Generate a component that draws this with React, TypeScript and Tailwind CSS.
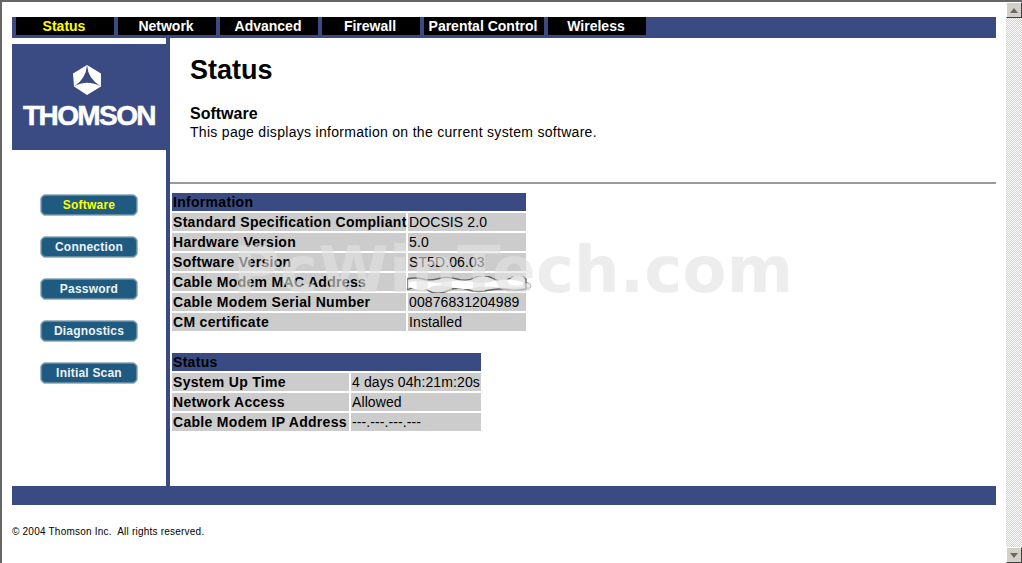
const tabs = [
  { label: 'Status', width: 'w-[98px]', active: true },
  { label: 'Network', width: 'w-[98px]' },
  { label: 'Advanced', width: 'w-[98px]' },
  { label: 'Firewall', width: 'w-[98px]' },
  { label: 'Parental Control', width: 'w-[120px]' },
  { label: 'Wireless', width: 'w-[98px]' },
];

const sideLinks = ['Software', 'Connection', 'Password', 'Diagnostics', 'Initial Scan'];

const infoRows = [
  ['Standard Specification Compliant', 'DOCSIS 2.0'],
  ['Hardware Version', '5.0'],
  ['Software Version', 'ST5D.06.03'],
  ['Cable Modem MAC Address', ''],
  ['Cable Modem Serial Number', '00876831204989'],
  ['CM certificate', 'Installed'],
];

const statusRows = [
  ['System Up Time', '4 days 04h:21m:20s'],
  ['Network Access', 'Allowed'],
  ['Cable Modem IP Address', '---.---.---.---'],
];

const ThomsonMark = () => (
  <svg className="mr-1" width="28" height="30" viewBox="0 0 28 30">
    <path d="M14 0L28 8.500V21.500L14 30L1 21.500L0 8.500Z" fill="#fff" />
    <path d="M14 0Q15 14 28 21.500Q14 14 1 21.500Q13 14 14 0Z" fill="#3a4b84" />
  </svg>
);

// white scribble someone painted over the MAC address
const Scribble = () => (
  <svg className="absolute left-[-1px] top-[3px]" width="125" height="17" viewBox="0 0 125 17">
    <path d="M0 3Q8 1 16 3T32 2.500T50 3T68 1.500T86 2.500T104 1.500T119 3L119 13Q110 15 100 13.500T80 14.500T60 13.500T40 15T20 14T0 14Z" fill="#e4e4e4" stroke="#666666" strokeWidth="1.400" />
    <path d="M2 6Q12 4.500 22 6T44 5.500T66 6T88 5T116 6L116 11Q104 12.500 88 11T66 12T44 11T22 12T2 11Z" fill="#ffffff" />
    <path d="M119 6L123 8L124 11Q122 13 119 12" fill="none" stroke="#888888" strokeWidth="1" />
  </svg>
);

const DataRow = ({ label, value, scribble }: { label: string; value: string; scribble?: boolean }) => (
  <>
    <div className="h-[18px] bg-[#cccccc] pl-px text-[14px] leading-[18px] font-bold tracking-[0.3px] whitespace-nowrap text-black">{label}</div>
    <div className="relative h-[18px] bg-[#cccccc] pl-px text-[14px] leading-[18px] tracking-[0.1px] whitespace-nowrap text-black">
      {value}
      {scribble && <Scribble />}
    </div>
  </>
);

export default function App() {
  return (
    <div className="relative flex h-[563px] w-[1022px] overflow-hidden border-t-2 border-l-2 border-[#666666] bg-white font-['Liberation_Sans',Arial,sans-serif]">
      <div className="w-[1004px] px-[10px] pt-[15px]">
        {/* Top tabs */}
        <nav className="flex h-[21px] items-start gap-1 bg-[#3a4b84] pl-1">
          {tabs.map((tab) => (
            <div
              key={tab.label}
              className={`flex h-[18px] items-center justify-center bg-black pr-[2px] text-[14px] font-bold ${tab.width} ${tab.active ? 'text-[#ffff00]' : 'text-white'}`}
            >
              {tab.label}
            </div>
          ))}
        </nav>

        <div className="flex h-[448px]">
          {/* Left column */}
          <aside className="w-[158px] border-r-4 border-[#3a4b84] pt-[6px]">
            <div className="flex h-[106px] flex-col items-center bg-[#3a4b84] pt-[21px]">
              <ThomsonMark />
              <span className="mt-1 text-[28px] leading-[34px] font-bold tracking-[-1.6px] text-white [-webkit-text-stroke:0.5px_white]">THOMSON</span>
            </div>
            <div className="mt-[44px] flex flex-col gap-5 pl-7">
              {sideLinks.map((link, i) => (
                <div
                  key={link}
                  className={`flex h-[22px] w-[98px] items-center justify-center rounded-[6px] border border-[#a5bbc6] bg-[#1f5a80] text-[12px] font-bold tracking-[0.2px] shadow-[inset_0_0_0_1px_#5f8aa2] ${i === 0 ? 'text-[#ffff00]' : 'text-[#eef3f6]'}`}
                >
                  {link}
                </div>
              ))}
            </div>
          </aside>

          {/* Main content */}
          <main className="flex-1">
            <div className="h-[144px] pl-5 pt-[15px]">
              <h1 className="text-[27px] leading-[34px] font-bold text-black">Status</h1>
              <h2 className="mt-[18px] text-[16px] leading-[18px] font-bold text-black">Software</h2>
              <p className="text-[14px] leading-[18px] tracking-[0.3px] text-black">This page displays information on the current system software.</p>
            </div>
            <div className="h-[2px] bg-[#9a9a9a]" />
            <div className="pl-[2px] pt-[9px]">
              <div className="grid w-[354px] grid-cols-[234px_118px] gap-[2px]">
                <div className="col-span-2 h-[18px] bg-[#3a4b84] pl-px text-[14px] leading-[18px] font-bold tracking-[0.3px] text-black">Information</div>
                {infoRows.map(([label, value]) => (
                  <DataRow key={label} label={label} value={value} scribble={label.includes('MAC')} />
                ))}
              </div>
              <div className="mt-[22px] grid w-[309px] grid-cols-[177px_130px] gap-[2px]">
                <div className="col-span-2 h-[18px] bg-[#3a4b84] pl-px text-[14px] leading-[18px] font-bold tracking-[0.3px] text-black">Status</div>
                {statusRows.map(([label, value]) => (
                  <DataRow key={label} label={label} value={value} />
                ))}
              </div>
            </div>
          </main>
        </div>

        <div className="h-[19px] bg-[#3a4b84]" />
        <p className="mt-[21px] text-[10px] leading-[12px] tracking-[0.22px] whitespace-pre text-black">© 2004 Thomson Inc.  All rights reserved.</p>
      </div>

      {/* Scrollbar */}
      <div className="flex w-4 flex-col justify-between bg-[repeating-conic-gradient(#d4d0c8_0_25%,#ffffff_0_50%)] bg-[length:2px_2px]">
        <div className="flex h-4 w-4 items-center justify-center border border-t-white border-r-[#404040] border-b-[#404040] border-l-white bg-[#d4d0c8]">
          <svg width="8" height="5" viewBox="0 0 8 5"><path d="M4 0L8 5H0Z" fill="#6a6a6a" /></svg>
        </div>
        <div className="flex h-4 w-4 items-center justify-center border border-t-white border-r-[#404040] border-b-[#404040] border-l-white bg-[#d4d0c8]">
          <svg width="8" height="5" viewBox="0 0 8 5"><path d="M0 0H8L4 5Z" fill="#6a6a6a" /></svg>
        </div>
      </div>

      {/* Watermark across the page */}
      <div className="pointer-events-none absolute top-[228px] left-[231px] font-['DejaVu_Sans',sans-serif] text-[64px] leading-[80px] font-bold tracking-[0.2px] whitespace-nowrap text-[rgba(225,225,225,0.6)]">PcWinTech.com</div>
    </div>
  );
}
